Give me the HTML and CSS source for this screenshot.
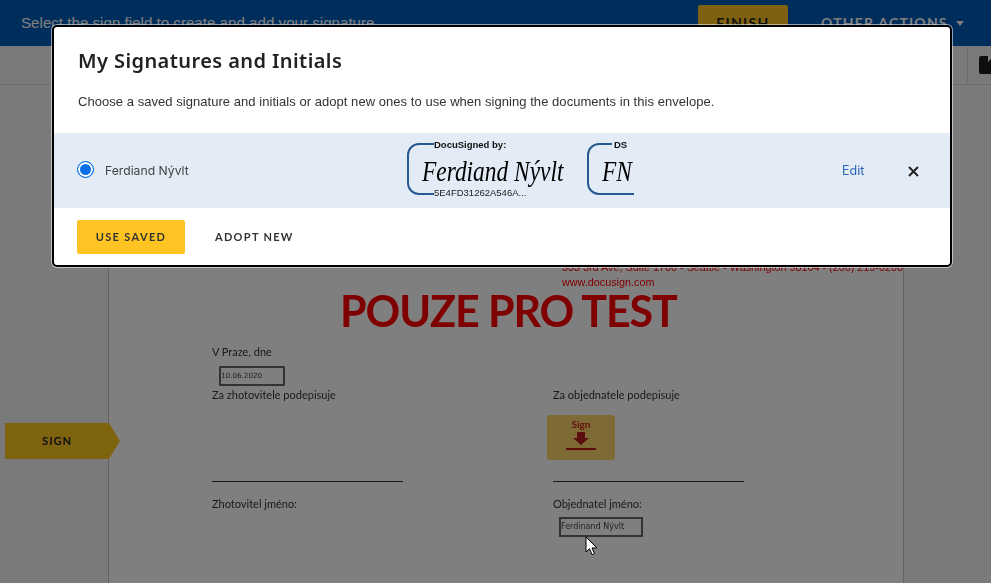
FILE: index.html
```html
<!DOCTYPE html>
<html lang="en">
<head>
<meta charset="utf-8">
<title>My Signatures and Initials</title>
<link rel="stylesheet" href="styles.css">
</head>
<body>
<div class="app">
  <header class="topbar">
    <p class="topbar-msg">Select the sign field to create and add your signature</p>
    <button class="finish">FINISH</button>
    <span class="other">OTHER ACTIONS<i class="caret"></i></span>
  </header>
  <div class="toolbar">
    <span class="tool-sep"></span>
    <svg class="tool-icon" width="22" height="18" viewBox="0 0 22 18"><path d="M2 0h7v6l3-3 2 2h4a2 2 0 0 1 2 2v9a2 2 0 0 1-2 2H2a2 2 0 0 1-2-2V2a2 2 0 0 1 2-2z" fill="#1d1d1d"/></svg>
  </div>
  <main class="viewer">
    <article class="doc">
      <div class="doc-head">
        <p>333 3rd Ave, Suite 1700 - Seattle - Washington 98104 - (206) 219-0200</p>
        <p>www.docusign.com</p>
      </div>
      <h2 class="watermark">POUZE PRO TEST</h2>
      <p class="doc-label place">V Praze, dne</p>
      <div class="field date">10.06.2020</div>
      <div class="cols">
        <div class="col">
          <p class="doc-label">Za zhotovitele podepisuje</p>
          <div class="sign-space"></div>
          <div class="rule"></div>
          <p class="doc-label name">Zhotovitel jméno:</p>
        </div>
        <div class="col">
          <p class="doc-label">Za objednatele podepisuje</p>
          <div class="sign-space">
            <div class="sign-tab">
              <span>Sign</span>
              <svg width="30" height="19" viewBox="0 0 30 19"><path d="M11 1h8v6h4l-8 7-8-7h4z" fill="#b81c1c"/><rect y="17" width="30" height="2" fill="#b81c1c"/></svg>
            </div>
          </div>
          <div class="rule"></div>
          <p class="doc-label name">Objednatel jméno:</p>
          <div class="field signer">Ferdinand Nývlt</div>
        </div>
      </div>
    </article>
  </main>
  <div class="sign-flag">SIGN</div>
</div>

<div class="scrim"></div>

<section class="modal">
  <h1 class="modal-title">My Signatures and Initials</h1>
  <p class="modal-desc">Choose a saved signature and initials or adopt new ones to use when signing the documents in this envelope.</p>
  <div class="sig-row">
    <span class="radio"></span>
    <span class="sig-name">Ferdiand Nývlt</span>
    <div class="stamp stamp-full">
      <svg class="bracket" width="160" height="52" viewBox="0 0 160 52"><path d="M27 1H12A11 11 0 0 0 1 12v28a11 11 0 0 0 11 11h15" fill="none" stroke="#27588f" stroke-width="2"/></svg>
      <span class="stamp-top">DocuSigned by:</span>
      <span class="script">Ferdiand Nývlt</span>
      <span class="stamp-bottom">5E4FD31262A546A...</span>
    </div>
    <div class="stamp stamp-initial">
      <svg class="bracket" width="47" height="52" viewBox="0 0 47 52"><path d="M25 1H12A11 11 0 0 0 1 12v28a11 11 0 0 0 11 11h35" fill="none" stroke="#27588f" stroke-width="2"/></svg>
      <span class="stamp-top">DS</span>
      <span class="script">FN</span>
    </div>
    <a class="edit">Edit</a>
    <svg class="close" width="11" height="11" viewBox="0 0 11 11"><path d="M1 1l9 9M10 1l-9 9" stroke="#222" stroke-width="2" fill="none"/></svg>
  </div>
  <div class="modal-foot">
    <button class="btn-primary">USE SAVED</button>
    <button class="btn-text">ADOPT NEW</button>
  </div>
</section>

<svg class="pointer" width="13" height="20" viewBox="0 0 13 20"><path d="M1 1v15l3.500-3.300 2.500 6 2.500-1-2.500-5.800h5z" fill="#fff" stroke="#000" stroke-width="1"/></svg>
</body>
</html>
```
FILE: styles.css
```css
* { box-sizing: border-box; }
html, body { margin: 0; height: 100%; overflow: hidden; }
body { font-family: "Liberation Sans", Arial, sans-serif; background: #f2f2f2; }
p, h1, h2 { margin: 0; font-weight: normal; }
button { font: inherit; border: 0; cursor: pointer; }

.app { height: 583px; display: flex; flex-direction: column; position: relative; overflow: hidden; }

.topbar { height: 46px; flex: none; background: #005cb9; display: flex; align-items: flex-start; padding: 5px 21px 0 21px; color: #fff; }
.topbar-msg { font-size: 15.150px; line-height: 35px; flex: 1; }
.finish { width: 90px; height: 36px; background: #ffc423; color: #1e1e1e; border-radius: 2px; font-family: "Lato", sans-serif; font-weight: 700; font-size: 14px; letter-spacing: 1.300px; padding-top: 0; }
.other { margin-left: 33px; width: 149px; white-space: nowrap; font-family: "Lato", sans-serif; font-weight: 700; font-size: 14px; letter-spacing: 1.200px; line-height: 36px; }
.caret { display: inline-block; margin-left: 8px; vertical-align: 2px; border: 4px solid transparent; border-top: 5px solid #fff; border-bottom: 0; }

.toolbar { height: 39px; flex: none; background: #f4f4f4; border-bottom: 1px solid #dcdcdc; display: flex; align-items: center; justify-content: flex-end; overflow: hidden; }
.tool-sep { width: 1px; height: 38px; background: #dcdcdc; margin-right: 11px; }
.tool-icon { flex: none; margin-right: -10px; margin-top: -1px; }

.viewer { flex: 1; background: #f4f4f4; display: flex; padding-left: 108px; min-height: 0; }
.doc { width: 796px; background: #fff; border-left: 1px solid #c4c4c4; border-right: 1px solid #c4c4c4; padding: 175px 0 0 103px; filter: blur(.3px); color: #333; font-family: "Lato", sans-serif; flex: none; }

.doc-head { margin-left: 350px; color: #f00; font-family: "Liberation Sans", sans-serif; font-size: 10.800px; line-height: 15px; white-space: nowrap; }
.watermark { margin: -1px 0 0 128px; height: 44px; font-family: "Lato", sans-serif; font-weight: 700; font-size: 43px; line-height: 44px; letter-spacing: -1.100px; color: #f00; white-space: nowrap; }
.doc-label { font-size: 11px; line-height: 14px; white-space: nowrap; }
.place { margin-top: 12px; }
.field { border: 2px solid #666; font-family: "DejaVu Sans", sans-serif; font-size: 8px; line-height: 16px; height: 20px; white-space: nowrap; color: #444; }
.date { width: 66px; margin: 7px 0 0 7px; font-size: 7.200px; }
.cols { display: grid; grid-template-columns: 341px 191px; margin-top: 2px; }
.col { min-width: 0; }
.sign-space { height: 79px; position: relative; }
.sign-tab { width: 68px; height: 45px; margin: 13px 0 0 -6px; position: absolute; background: #fdd56a; border-radius: 3px; display: flex; flex-direction: column; align-items: center; color: #c81f1f; font-size: 10px; font-weight: 700; line-height: 12px; padding-top: 3px; }
.sign-tab svg { margin-top: 1px; }
.rule { height: 1px; background: #333; width: 191px; }
.name { margin-top: 15px; }
.signer { width: 84px; margin: 6px 0 0 6px; }

.sign-flag { position: absolute; left: 5px; top: 423px; width: 115px; height: 36px; background: #ffc820; clip-path: polygon(0 0, 104px 0, 100% 50%, 104px 100%, 0 100%); font-family: "Lato", sans-serif; font-weight: 700; font-size: 11px; letter-spacing: 1.100px; color: #222; line-height: 36px; padding-left: 37px; }

.scrim { position: fixed; inset: 0; background: rgba(0, 0, 0, .5); }

.modal { position: fixed; left: 52px; top: 25px; width: 900px; height: 242px; background: #fff; border: 2px solid #000; border-radius: 5px; box-shadow: 0 0 0 1px rgba(255, 255, 255, .55); display: flex; flex-direction: column; overflow: hidden; }
.modal-title { margin: 21px 0 0 24px; font-family: "Noto Sans", sans-serif; font-weight: 600; font-size: 20px; line-height: 26px; letter-spacing: .42px; color: #222; }
.modal-desc { margin: 20px 0 0 24px; font-size: 13px; line-height: 16px; color: #333; letter-spacing: .045px; }
.sig-row { margin-top: 23px; height: 75px; background: #e2ebf6; border-top: 1px solid #e9e9e9; display: flex; align-items: center; padding-left: 23px; }
.radio { width: 17px; height: 17px; border-radius: 50%; border: 1.500px solid #0a6fe8; background: #0a6fe8; box-shadow: inset 0 0 0 2px #fff; margin-top: -4px; flex: none; }
.sig-name { width: 302px; margin-left: 11px; font-family: "Inter", sans-serif; font-size: 12.200px; color: #444; margin-top: -1px; }
.stamp { position: relative; height: 52px; flex: none; margin-top: -4px; color: #111; }
.stamp-full { width: 180px; }
.stamp-initial { width: 47px; }
.bracket { position: absolute; left: 0; top: 0; }
.stamp-top { position: absolute; left: 27px; top: -3px; font-size: 9.500px; font-weight: 700; line-height: 10px; background: #e2ebf6; padding: 0 1px 1px 0; white-space: nowrap; }
.stamp-bottom { position: absolute; left: 27px; top: 45px; font-size: 9.500px; line-height: 10px; background: #e2ebf6; white-space: nowrap; color: #222; }
.script { position: absolute; left: 15px; top: 12px; font-family: "Liberation Serif", serif; font-style: italic; font-size: 30px; line-height: 32px; white-space: nowrap; transform: scaleX(.78); transform-origin: 0 0; color: #000; }
.edit { margin-left: 208px; font-family: "Inter", sans-serif; font-size: 12.500px; color: #2a66b8; margin-top: -1px; width: 23px; flex: none; }
.close { margin: 0 0 0 43px; flex: none; }
.modal-foot { flex: 1; display: flex; align-items: center; padding: 0 0 0 23px; }
.btn-primary { width: 108px; height: 34px; background: #ffc423; border-radius: 2px; font-family: "Lato", sans-serif; font-weight: 700; font-size: 11px; letter-spacing: 1.350px; color: #333; }
.btn-text { margin-left: 30px; padding: 0; background: none; font-family: "Lato", sans-serif; font-weight: 700; font-size: 11px; letter-spacing: 1.300px; color: #333; }

.pointer { position: fixed; left: 585px; top: 536px; }
```
